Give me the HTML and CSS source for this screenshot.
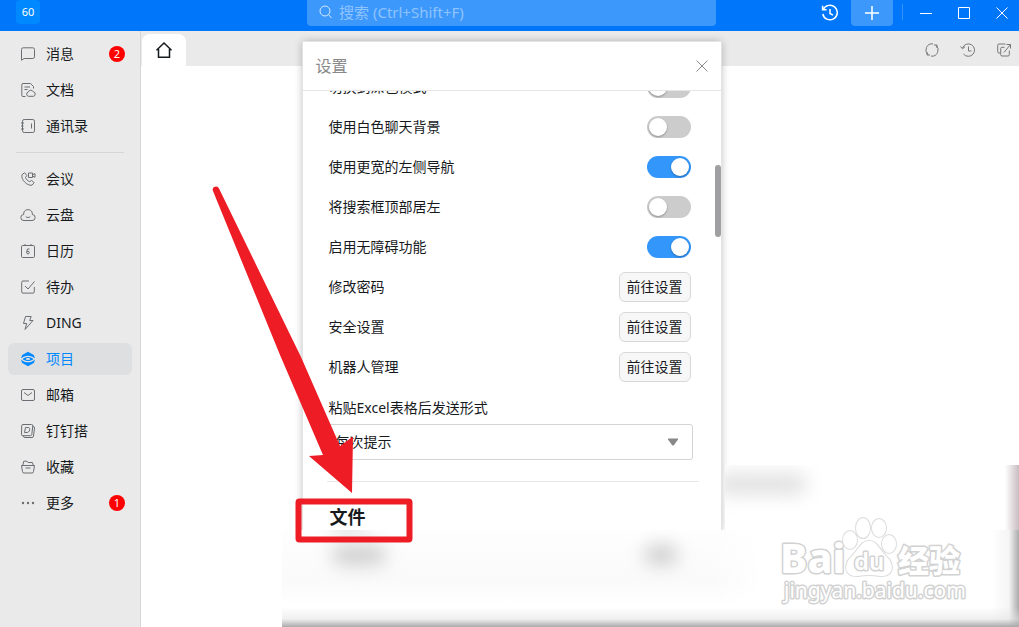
FILE: index.html
```html
<!DOCTYPE html>
<html lang="zh-CN">
<head>
<meta charset="utf-8">
<meta name="viewport" content="width=device-width, initial-scale=1">
<title>设置</title>
<link rel="stylesheet" href="styles.css">
</head>
<body>
<header class="topbar">
  <div class="logo">60</div>
  <label class="search">
    <svg width="14" height="14" viewBox="0 0 14 14"><circle cx="6" cy="6" r="5"/><path d="M9.5 9.5l3 3.5"/></svg>
    <input type="text" aria-label="搜索" placeholder="搜索 (Ctrl+Shift+F)">
  </label>
  <div class="top-actions">
    <button class="tool" aria-label="历史"><svg width="18" height="18" viewBox="0 0 18 18"><path d="M2.3 5.5A7.3 7.3 0 1 1 1.8 10M1.6 1.8v4h4M9 5v4.5l3 1.7"/></svg></button>
    <button class="tool add" aria-label="新建"><svg width="16" height="16" viewBox="0 0 16 16"><path d="M8 1v14M1 8h14"/></svg></button>
    <span class="bar"></span>
    <button class="tool win" aria-label="最小化"><svg width="12" height="12" viewBox="0 0 12 12"><path d="M0 6.5h12"/></svg></button>
    <button class="tool win" aria-label="最大化"><svg width="12" height="12" viewBox="0 0 12 12"><path d="M.5 .5h11v11h-11z"/></svg></button>
    <button class="tool win" aria-label="关闭"><svg width="12" height="12" viewBox="0 0 12 12"><path d="M.5 .5l11 11M11.5 .5l-11 11"/></svg></button>
  </div>
</header>
<div class="shell">
  <nav class="sidebar">
    <ul class="nav">
      <li><a href="#" class="item"><svg viewBox="0 0 16 16"><path d="M1.500 14.200V3.500a1.700 1.700 0 0 1 1.700-1.700h9.600a1.700 1.700 0 0 1 1.700 1.700v7.300a1.700 1.700 0 0 1-1.700 1.700H4.200z"/></svg><span>消息</span><b class="badge">2</b></a></li>
      <li><a href="#" class="item"><svg viewBox="0 0 16 16"><path d="M5.500 14.500H3A1.200 1.200 0 0 1 1.800 13.300V2.700A1.200 1.200 0 0 1 3 1.500h7.500l3 3v2M4.500 5h5.500M4.500 7.500h3M8.500 14.300a2.200 2.200 0 0 1-.2-4.300 2.700 2.700 0 0 1 5-.2 2.300 2.300 0 0 1 .2 4.500z"/></svg><span>文档</span></a></li>
      <li><a href="#" class="item"><svg viewBox="0 0 16 16"><rect x="2.500" y="1.500" width="12" height="13" rx="1.700"/><path d="M11.500 5.500v5M1 5h3M1 8h2.500M1 11h3"/></svg><span>通讯录</span></a></li>
    </ul>
    <hr class="split">
    <ul class="nav">
      <li><a href="#" class="item"><svg viewBox="0 0 16 16"><path d="M4.200 2L2 3.700C.7 8.500 7 15 12 14.200l1.800-2.100a.8.800 0 0 0-.1-1L11.500 9.500l-2 1.200C7.500 9.800 6.300 8.300 5.500 6.500l1.300-2L5.200 2.200A.7.700 0 0 0 4.200 2z"/><path d="M8.500 2h4v4.500h-4zM12.500 3.700l2.500-1v3.500l-2.500-1"/></svg><span>会议</span></a></li>
      <li><a href="#" class="item"><svg viewBox="0 0 16 16"><path d="M4 13.500a3 3 0 0 1-.3-6C3 1 13 1 12.300 7.500a3 3 0 0 1-.3 6zM5.700 9.500c1.200 1.400 3.400 1.400 4.600 0"/></svg><span>云盘</span></a></li>
      <li><a href="#" class="item"><svg viewBox="0 0 16 16"><rect x="1.500" y="2.500" width="13" height="12" rx="1.200"/><path d="M5 1v2M11 1v2M9.600 6H7.500L6.600 9.300M8 8.300a1.300 1.300 0 1 1-1.300 1.300A1.300 1.300 0 0 1 8 8.300z"/></svg><span>日历</span></a></li>
      <li><a href="#" class="item"><svg viewBox="0 0 16 16"><path d="M9 2H3a1.300 1.300 0 0 0-1.300 1.300v9.500A1.300 1.300 0 0 0 3 14.100h10a1.300 1.300 0 0 0 1.300-1.300V8M5 7l3 3 6.500-7.500"/></svg><span>待办</span></a></li>
      <li><a href="#" class="item"><svg viewBox="0 0 16 16"><path d="M5.500 1.500h5.700L9.700 5.500H13L5 14.500l1.700-6H3.500z"/></svg><span>DING</span></a></li>
      <li><a href="#" class="item active"><svg viewBox="0 0 16 16"><path class="solid" d="M8 .7l5.800 3.200 1.200 3.400C12.500 5.700 11 4.700 8 4.700S3.500 5.700 1 7.300l1.200-3.400z"/><path class="solid" d="M8 15.300l-5.800-3.200L1 8.700c2.500 1.600 4 2.600 7 2.600s4.500-1 7-2.600l-1.200 3.400z"/><path class="solid" d="M2.500 8C6 5.300 10 5.300 13.500 8 10 10.700 6 10.700 2.500 8z"/><ellipse class="hole" cx="8" cy="8" rx="2.200" ry="1"/></svg><span>项目</span></a></li>
      <li><a href="#" class="item"><svg viewBox="0 0 16 16"><rect x="1.500" y="2.500" width="13" height="11" rx="1.500"/><path d="M4 5.500l4 3 4-3"/></svg><span>邮箱</span></a></li>
      <li><a href="#" class="item"><svg viewBox="0 0 16 16"><path d="M3 1.500h8.500a1.300 1.300 0 0 1 1.300 1.500l-1 8.500a1.400 1.400 0 0 1-1.400 1.200H2.800A1.300 1.300 0 0 1 1.500 11.200l.2-8.400A1.300 1.300 0 0 1 3 1.500zM12.800 3.500a1.500 1.500 0 0 1 1.700 1.500l-1 8a1.500 1.500 0 0 1-1.500 1.500H5a1.500 1.500 0 0 1-1.500-1.700M5.500 4.500h2.800c2.500 0 1.600 5-1.300 5H4.500z"/></svg><span>钉钉搭</span></a></li>
      <li><a href="#" class="item"><svg viewBox="0 0 16 16"><path d="M1.500 6.500h13l-1 6.200a1.500 1.500 0 0 1-1.500 1.300H4a1.500 1.500 0 0 1-1.500-1.300zM2.800 6L3.800 2.200H7l1 1.300h4.500l.7 2.500M5.500 9h5"/></svg><span>收藏</span></a></li>
      <li><a href="#" class="item"><svg viewBox="0 0 16 16"><g class="dots"><circle cx="3" cy="8" r="1.200"/><circle cx="8" cy="8" r="1.200"/><circle cx="13" cy="8" r="1.200"/></g></svg><span>更多</span><b class="badge">1</b></a></li>
    </ul>
  </nav>
  <main class="main">
    <div class="tabs">
      <button class="tab" aria-label="首页"><svg width="18" height="18" viewBox="0 0 18 18"><path d="M1.500 9.200L9 2l7.500 7.200M3.500 8v8.300h11V8"/></svg></button>
      <div class="tab-tools">
        <button aria-label="刷新"><svg width="16" height="16" viewBox="0 0 16 16"><path d="M9 1.900A6.200 6.200 0 0 0 4 12.700M3 10v3h3M7 14.100A6.200 6.200 0 0 0 12 3.300M13 6V3h-3"/></svg></button>
        <button aria-label="历史"><svg width="16" height="16" viewBox="0 0 16 16"><path d="M2.500 6A6.200 6.200 0 1 1 3.500 12M.5 4.500l2 2.300 2.500-2M8.500 4.500V9h3"/></svg></button>
        <button aria-label="新窗口"><svg width="16" height="16" viewBox="0 0 16 16"><path d="M4 11H3a1.300 1.300 0 0 1-1.300-1.300v-6.500A1.300 1.300 0 0 1 3 2h6.500M8.500 5.300H6A1.300 1.300 0 0 0 4.700 6.500v6.200A1.300 1.300 0 0 0 6 14h6a1.300 1.300 0 0 0 1.300-1.300V8.500M8 10.500L14 3M10.500 2.500h4v4"/></svg></button>
      </div>
    </div>
    <div class="canvas"></div>
  </main>
</div>

<section class="dialog" role="dialog" aria-labelledby="dialog-title">
  <header class="dialog-head">
    <h1 id="dialog-title">设置</h1>
    <button aria-label="关闭设置"><svg width="12" height="12" viewBox="0 0 12 12"><path d="M.5 .5l11 11M11.500 .5l-11 11"/></svg></button>
  </header>
  <div class="dialog-body">
    <div class="rows">
      <div class="row"><label for="dark">切换到深色模式</label><input id="dark" class="switch" type="checkbox"></div>
      <div class="row"><label for="white">使用白色聊天背景</label><input id="white" class="switch" type="checkbox"></div>
      <div class="row"><label for="wide">使用更宽的左侧导航</label><input id="wide" class="switch" type="checkbox" checked></div>
      <div class="row"><label for="left">将搜索框顶部居左</label><input id="left" class="switch" type="checkbox"></div>
      <div class="row"><label for="a11y">启用无障碍功能</label><input id="a11y" class="switch" type="checkbox" checked></div>
      <div class="row"><span>修改密码</span><button class="go">前往设置</button></div>
      <div class="row"><span>安全设置</span><button class="go">前往设置</button></div>
      <div class="row"><span>机器人管理</span><button class="go">前往设置</button></div>
    </div>
    <label class="paste-label" for="paste">粘贴Excel表格后发送形式</label>
    <div class="select-box">
      <select id="paste"><option>每次提示</option></select>
      <svg width="12" height="8" viewBox="0 0 12 8"><path d="M1.500 .5h9q1 0 .5 1L7 7Q6 8 5 7L1 1.500q-.5-1 .5-1z"/></svg>
    </div>
    <hr class="section-line">
    <h2>文件</h2>
    <span class="thumb"></span>
  </div>
</section>

<div class="haze haze-side"><i class="blob blob-side"></i></div>
<div class="haze haze-bottom"><i class="blob blob-title"></i><i class="blob blob-a"></i><i class="blob blob-b"></i></div>

<svg class="watermark" width="190" height="96" viewBox="0 0 190 96">
  <g class="outline">
    <text x="3" y="61" font-size="41" font-weight="800" class="latin">Bai</text>
    <path d="M92 29c-8 0-10 8-17 15-9 8-8 21 6 20q11-2 22 0c14 1 15-12 6-20-7-7-9-15-17-15z"/>
    <ellipse cx="73" cy="28" rx="7" ry="9"/><ellipse cx="86" cy="16" rx="7" ry="10"/><ellipse cx="102" cy="16" rx="7" ry="9"/><ellipse cx="112" cy="32" rx="7" ry="9"/>
    <text x="77" y="58" font-size="24" font-weight="600" class="latin">du</text>
    <text x="121" y="60" font-size="31" font-weight="900" class="cjk">经验</text>
    <text x="7" y="86" font-size="21" font-weight="400" class="latin">jingyan.baidu.com</text>
  </g>
</svg>

<svg class="marks" width="220" height="370" viewBox="0 0 220 370">
  <path class="arrow" d="M13 11a3.200 3.200 0 0 1 6-2.500L101 177 140 266l13-9.500L152 313l-43-37 14-1L80 175z"/>
  <rect x="98.500" y="321.500" width="111" height="38" rx="1"/>
</svg>
</body>
</html>
```
FILE: styles.css
```css
* { box-sizing: border-box; }
body {
  margin: 0;
  height: 100vh;
  display: flex;
  flex-direction: column;
  position: relative;
  overflow: hidden;
  background: #fff;
  color: #171a1d;
  font: 14px/20px "Noto Sans", "Noto Sans CJK SC", sans-serif;
}
button { border: 0; padding: 0; background: none; font: inherit; color: inherit; }
svg { display: block; fill: none; stroke: currentColor; }
ul { list-style: none; margin: 0; padding: 0; }

.topbar {
  flex: none;
  height: 31px;
  display: flex;
  align-items: flex-start;
  background: #0077fa;
  color: #fff;
}
.logo {
  width: 24px;
  height: 24px;
  margin: 0 267px 0 16px;
  border-radius: 4px;
  background: #0089ff;
  font-size: 11px;
  line-height: 24px;
  text-align: center;
}
.search {
  flex: 1;
  height: 26px;
  display: flex;
  align-items: center;
  gap: 6px;
  padding: 0 12px 2px;
  border-radius: 0 0 4px 4px;
  background: #3d98fc;
  color: #d5e8fe;
}
.search input {
  flex: 1;
  min-width: 0;
  padding: 0;
  border: 0;
  outline: 0;
  background: none;
  color: #fff;
  font: inherit;
  font-size: 15px;
}
.search input::placeholder { color: #8fc3fd; opacity: 1; }
.top-actions { width: 303px; display: flex; justify-content: flex-end; }
.tool { width: 42px; height: 26px; display: grid; place-items: center; }
.tool svg { stroke-width: 1.5; }
.add { border-radius: 0 0 4px 4px; background: #3d98fc; }
.win { width: 38px; }
.win svg { stroke-width: 1; }
.bar { width: 1px; height: 16px; margin: 4px 4px 0 9px; background: #3391fb; }
.win:last-child { margin-right: -2px; }

.shell { flex: 1; min-height: 0; display: flex; }
.sidebar {
  flex: none;
  width: 141px;
  padding: 7px 8px 0;
  border-right: 1px solid #d6d6d6;
  background: #eaeaea;
}
.nav { display: grid; gap: 4px; }
.item {
  height: 32px;
  display: flex;
  align-items: center;
  padding: 0 7px 0 12px;
  border-radius: 6px;
  color: inherit;
  text-decoration: none;
}
.item svg { width: 16px; height: 16px; margin-right: 10px; color: #6b6e72; }
.item span { flex: 1; }
.item .solid { fill: #0089ff; stroke: none; }
.item .hole { fill: #dedfe1; stroke: none; }
.dots { fill: #6b6e72; stroke: none; }
.active { background: #dedfe1; color: #0089ff; }
.badge {
  width: 16px;
  height: 16px;
  border-radius: 50%;
  background: #f00;
  color: #fff;
  font-size: 11px;
  font-weight: 400;
  line-height: 16px;
  text-align: center;
}
.split { height: 1px; margin: 10px 8px; border: 0; background: #d5d5d5; }

.main { flex: 1; display: flex; flex-direction: column; }
.tabs {
  height: 35px;
  display: flex;
  justify-content: space-between;
  align-items: flex-end;
  padding: 0 7px 0 1px;
  background: #eaeaea;
}
.tab {
  width: 44px;
  height: 32px;
  display: grid;
  place-items: center;
  border-radius: 8px 8px 0 0;
  background: #fff;
}
.tab svg { stroke-width: 1.5; }
.tab-tools { display: flex; gap: 20px; padding-bottom: 8px; color: #777; }
.canvas { flex: 1; background: #fff; }

.dialog {
  position: absolute;
  top: 42px;
  left: calc(50% - 207px);
  width: 418px;
  background: #fff;
  box-shadow: 0 0 0 1px #e4e4e4, 0 0 8px rgba(0, 0, 0, .3);
}
.dialog-head {
  height: 49px;
  display: flex;
  align-items: center;
  justify-content: space-between;
  padding: 0 13px;
  border-bottom: 1px solid #e6e6e6;
  color: #888;
}
.dialog-head h1 { margin: 0; font-size: 16px; font-weight: 400; line-height: 24px; }
.dialog-body { height: 440px; position: relative; overflow: hidden; padding: 0 22px 0 24px; }
.rows { margin-top: -24px; padding: 0 8px 0 2px; }
.row { height: 40px; display: flex; align-items: center; justify-content: space-between; }
.switch {
  appearance: none;
  width: 44px;
  height: 22px;
  margin: 0;
  padding: 2px;
  display: flex;
  border-radius: 11px;
  background: #ccc;
}
.switch::before {
  content: "";
  width: 18px;
  height: 18px;
  border-radius: 50%;
  background: #fff;
  box-shadow: 0 1px 2px rgba(0, 0, 0, .3);
}
.switch:checked { justify-content: flex-end; background: #3296fa; }
.go {
  width: 72px;
  height: 30px;
  border: 1px solid #d8d8d8;
  border-radius: 6px;
  background: #f7f7f7;
}
.paste-label { display: block; margin: 11px 2px 6px; }
.select-box { display: grid; align-items: center; margin-right: 6px; }
.select-box select {
  grid-area: 1 / 1;
  appearance: none;
  height: 36px;
  padding: 0 8px;
  border: 1px solid #d4d4d4;
  border-radius: 3px;
  background: #fff;
  color: inherit;
  font: inherit;
}
.select-box svg {
  grid-area: 1 / 1;
  justify-self: end;
  margin-right: 14px;
  fill: #888;
  stroke: none;
  pointer-events: none;
}
.section-line { height: 1px; margin: 21px 0 23px; border: 0; background: #e8e8e8; }
.dialog h2 { margin: 0 3px; font-size: 18px; font-weight: 700; line-height: 24px; }
.thumb {
  position: absolute;
  top: 74px;
  right: 0;
  width: 6px;
  height: 72px;
  border-radius: 3px;
  background: #a0a0a3;
}

.haze { position: absolute; overflow: hidden; pointer-events: none; }
.haze-side {
  top: 465px;
  right: 0;
  bottom: 0;
  left: 725px;
  background: linear-gradient(to left, #c8bcc1, rgba(255, 255, 255, 0) 14px), #fff;
}
.haze-bottom {
  top: 530px;
  right: 0;
  bottom: 0;
  left: 282px;
  background:
    linear-gradient(to top, #aaa, rgba(225, 225, 225, .5) 8px, rgba(255, 255, 255, 0) 20px),
    linear-gradient(to left, #aaa, rgba(235, 235, 235, .5) 10px, rgba(255, 255, 255, 0) 28px),
    linear-gradient(to right, rgba(255, 255, 255, 0) 430px, #fff 480px),
    linear-gradient(to bottom, #fefefe, #fafafa 50px, #fff 76px);
}
.blob { position: absolute; border-radius: 12px; background: #cecece; filter: blur(9px); }
.blob-side { top: 8px; left: -10px; width: 92px; height: 22px; background: #e2e2e2; }
.blob-title { top: -14px; left: 48px; width: 36px; height: 16px; background: #ddd; }
.blob-a { top: 15px; left: 50px; width: 54px; height: 20px; }
.blob-b { top: 15px; left: 362px; width: 34px; height: 20px; }

.watermark { position: absolute; right: 52px; bottom: 19px; }
.outline { fill: #fff; stroke: #d2d2d2; stroke-width: 3; stroke-linejoin: round; paint-order: stroke; }
.outline path, .outline ellipse { stroke-width: 2; stroke: #dcdcdc; }
.latin { font-family: "Noto Sans", sans-serif; }
.cjk { font-family: "Noto Sans CJK SC", sans-serif; }

.marks { position: absolute; top: 180px; left: 200px; pointer-events: none; }
.marks .arrow { fill: #ee1c24; stroke: none; }
.marks rect { stroke: #ee1c24; stroke-width: 6; }
```
